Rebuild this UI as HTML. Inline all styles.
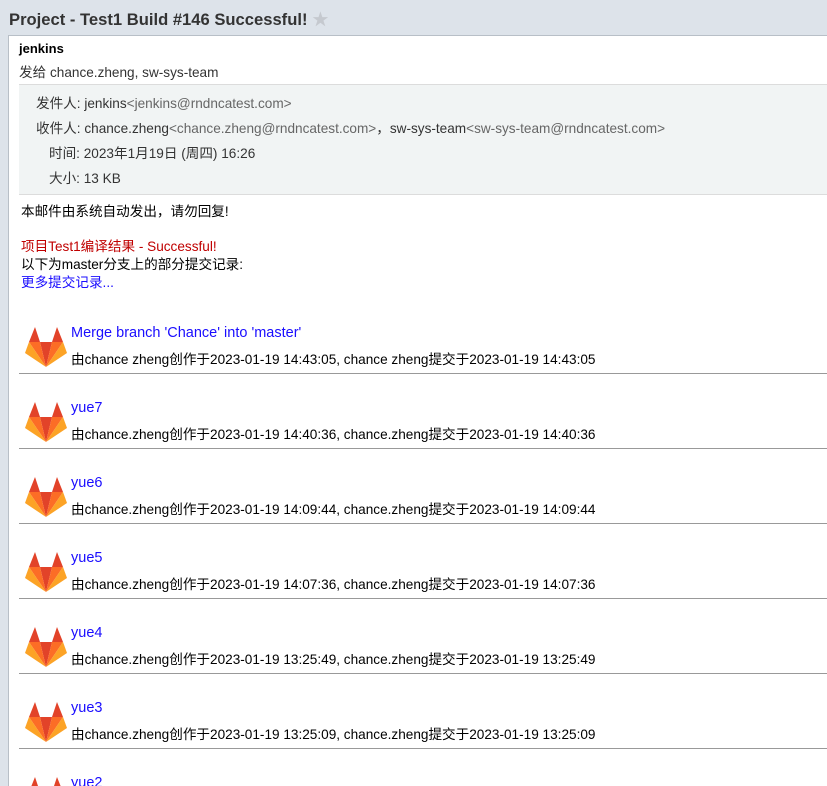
<!DOCTYPE html>
<html><head><meta charset="utf-8"><style>
html,body{margin:0;width:827px;height:786px;overflow:hidden}
body{background:#dde3ea;font-family:"Liberation Sans","Noto Sans CJK SC",sans-serif;font-size:13.6px;color:#000;position:relative}
.a{position:absolute;white-space:nowrap}
#title{left:9px;top:6px;font-size:16.6px;font-weight:bold;color:#333}
#panel{position:absolute;left:8px;top:35px;width:830px;height:760px;background:#fff;border:1px solid #b8bfc7}
#hdr{position:absolute;left:19px;top:84px;width:820px;height:109px;background:#f1f4f4;border-top:1px solid #dcdcdc;border-bottom:1px solid #dcdcdc}
.g{color:#666}
.hr{position:absolute;left:19px;width:820px;height:0;border-top:1px solid #999}
.t{color:#1a0dff;font-size:14.5px}
</style></head><body>
<div class="a" id="title">Project - Test1 Build #146 Successful! <span style="color:#c5c9cf">★</span></div>
<div id="panel"></div>
<div class="a" style="left:19px;top:41px;font-weight:bold;font-size:13px">jenkins</div>
<div class="a" style="left:19px;top:61px;color:#333">发给 chance.zheng, sw-sys-team</div>
<div id="hdr"></div>
<div class="a" style="left:36px;top:92px;color:#333">发件人: jenkins<span class="g">&lt;jenkins@rndncatest.com&gt;</span></div>
<div class="a" style="left:36px;top:117px;color:#333">收件人: chance.zheng<span class="g">&lt;chance.zheng@rndncatest.com&gt;</span>，sw-sys-team<span class="g">&lt;sw-sys-team@rndncatest.com&gt;</span></div>
<div class="a" style="left:49px;top:142px;color:#333">时间: 2023年1月19日 (周四) 16:26</div>
<div class="a" style="left:49px;top:167px;color:#333">大小: 13 KB</div>
<div class="a" style="left:21px;top:200px">本邮件由系统自动发出，请勿回复!</div>
<div class="a" style="left:21px;top:235px;color:#c00000">项目Test1编译结果 - Successful!</div>
<div class="a" style="left:21px;top:253px">以下为master分支上的部分提交记录:</div>
<div class="a" style="left:21px;top:271px;color:#1a0dff">更多提交记录...</div>
<svg width="0" height="0" style="position:absolute"><defs><g id="fox">
<polygon points="4,15 10,0 15,15" fill="#e24329"/>
<polygon points="27,15 32,0 38,15" fill="#e24329"/>
<polygon points="15,15 27,15 21,40" fill="#e24329"/>
<polygon points="4,15 15,15 21,40" fill="#fc6d26"/>
<polygon points="27,15 38,15 21,40" fill="#fc6d26"/>
<polygon points="4,15 0,26 21,40" fill="#fca326"/>
<polygon points="38,15 42,26 21,40" fill="#fca326"/>
</g></defs></svg>
<div id="rows"></div>
<script>
var d=[["Merge branch 'Chance' into 'master'","由chance zheng创作于2023-01-19 14:43:05, chance zheng提交于2023-01-19 14:43:05"],
["yue7","由chance.zheng创作于2023-01-19 14:40:36, chance.zheng提交于2023-01-19 14:40:36"],
["yue6","由chance.zheng创作于2023-01-19 14:09:44, chance.zheng提交于2023-01-19 14:09:44"],
["yue5","由chance.zheng创作于2023-01-19 14:07:36, chance.zheng提交于2023-01-19 14:07:36"],
["yue4","由chance.zheng创作于2023-01-19 13:25:49, chance.zheng提交于2023-01-19 13:25:49"],
["yue3","由chance.zheng创作于2023-01-19 13:25:09, chance.zheng提交于2023-01-19 13:25:09"],
["yue2",""]];
var h="";
d.forEach(function(r,i){var y=i*75;
h+='<svg class="a" style="left:25px;top:'+(327+y)+'px" width="42" height="40" viewBox="0 0 42 40"><use href="#fox"/></svg>';
h+='<div class="a t" style="left:71px;top:'+(325+y)+'px">'+r[0]+'</div>';
if(r[1])h+='<div class="a" style="left:71px;top:'+(348+y)+'px">'+r[1]+'</div><div class="hr" style="top:'+(373+y)+'px"></div>';});
document.getElementById("rows").innerHTML=h;
</script>
</body></html>
